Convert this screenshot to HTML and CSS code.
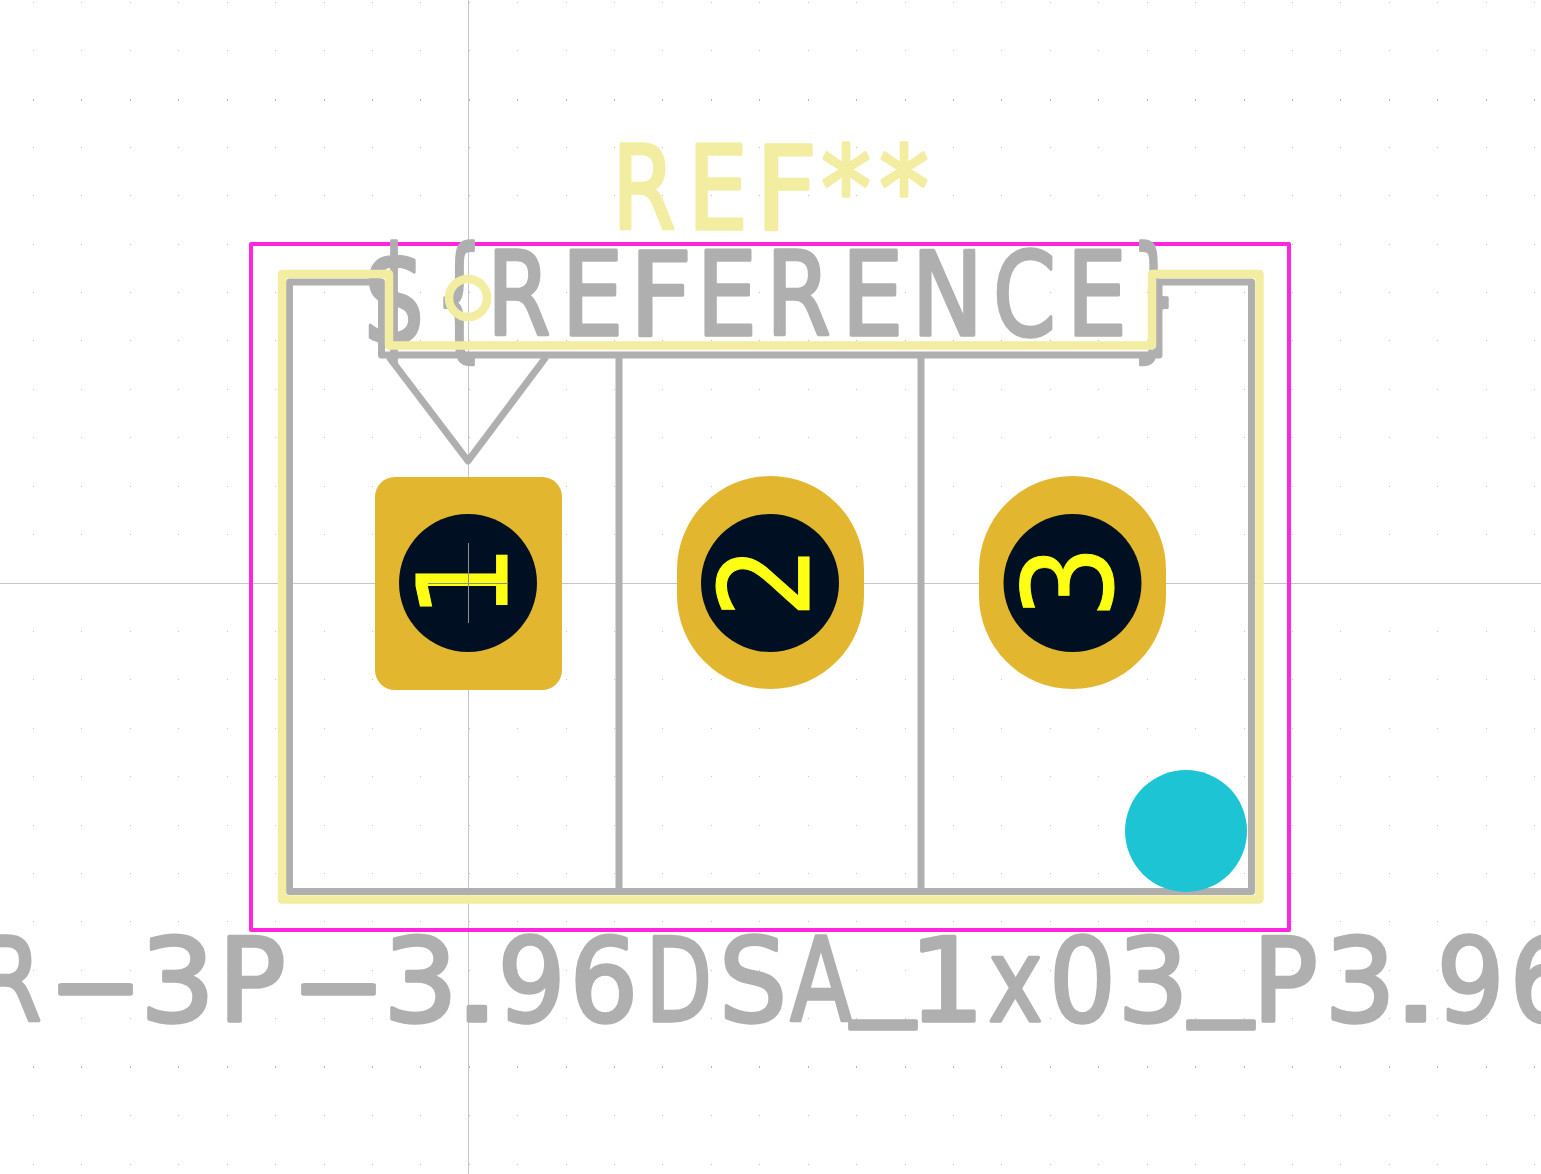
FILE: index.html
```html
<!DOCTYPE html>
<html lang="en">
<head>
  <meta charset="UTF-8" />
  <title>Footprint viewer</title>
  <link rel="stylesheet" href="styles.css">
</head>
<body>
  <svg class="canvas" viewBox="0 0 1541 1174">
    <!-- Grid -->
    <g class="grid-rows">
      <line x1="33" x2="1541" y1="2" y2="2" />
      <line x1="33" x2="1541" y1="50.4" y2="50.4" />
      <line class="major" x1="33" x2="1541" y1="100" y2="100" />
      <line x1="33" x2="1541" y1="147.2" y2="147.2" />
      <line x1="33" x2="1541" y1="195.6" y2="195.6" />
      <line x1="33" x2="1541" y1="244" y2="244" />
      <line x1="33" x2="1541" y1="292.5" y2="292.5" />
      <line x1="33" x2="1541" y1="340.9" y2="340.9" />
      <line x1="33" x2="1541" y1="389.3" y2="389.3" />
      <line x1="33" x2="1541" y1="437.7" y2="437.7" />
      <line x1="33" x2="1541" y1="486.2" y2="486.2" />
      <line x1="33" x2="1541" y1="534.6" y2="534.6" />
      <line x1="33" x2="1541" y1="631.4" y2="631.4" />
      <line x1="33" x2="1541" y1="679.8" y2="679.8" />
      <line x1="33" x2="1541" y1="728.3" y2="728.3" />
      <line x1="33" x2="1541" y1="776.7" y2="776.7" />
      <line x1="33" x2="1541" y1="825.1" y2="825.1" />
      <line x1="33" x2="1541" y1="873.5" y2="873.5" />
      <line x1="33" x2="1541" y1="921.9" y2="921.9" />
      <line x1="33" x2="1541" y1="970.4" y2="970.4" />
      <line x1="33" x2="1541" y1="1018.8" y2="1018.8" />
      <line class="major" x1="33" x2="1541" y1="1067" y2="1067" />
      <line x1="33" x2="1541" y1="1115.6" y2="1115.6" />
      <line x1="33" x2="1541" y1="1164" y2="1164" />
    </g>

    <!-- Origin axes -->
    <line class="axis" x1="468.5" x2="468.5" y1="0" y2="1174" />
    <line class="axis" x1="0" x2="1541" y1="583.5" y2="583.5" />

    <!-- Courtyard -->
    <rect class="courtyard" x="251" y="244" width="1038" height="686" />

    <!-- Fab layer text and outline -->
    <text class="fab-text" y="335">
      <tspan class="tall" x="361.6" y="343" textLength="66" lengthAdjust="spacingAndGlyphs">$</tspan><tspan class="tall" x="434.7" textLength="48.7" lengthAdjust="spacingAndGlyphs">{</tspan><tspan x="487" y="335" textLength="63.6" lengthAdjust="spacingAndGlyphs">R</tspan><tspan x="561.4" textLength="61.9" lengthAdjust="spacingAndGlyphs">E</tspan><tspan x="629.2" textLength="63.1" lengthAdjust="spacingAndGlyphs">F</tspan><tspan x="696.6" textLength="60.5" lengthAdjust="spacingAndGlyphs">E</tspan><tspan x="765.9" textLength="64.8" lengthAdjust="spacingAndGlyphs">R</tspan><tspan x="841.4" textLength="61.9" lengthAdjust="spacingAndGlyphs">E</tspan><tspan x="911.6" textLength="71.8" lengthAdjust="spacingAndGlyphs">N</tspan><tspan x="993" textLength="62.9" lengthAdjust="spacingAndGlyphs">C</tspan><tspan x="1066.6" textLength="60.5" lengthAdjust="spacingAndGlyphs">E</tspan><tspan class="tall" x="1131.1" y="343" textLength="45.7" lengthAdjust="spacingAndGlyphs">}</tspan>
    </text>
    <text class="fab-text" y="1021">
      <tspan x="-23.1" textLength="64.8" lengthAdjust="spacingAndGlyphs">R</tspan><tspan x="49.5" textLength="92" lengthAdjust="spacingAndGlyphs">-</tspan><tspan x="140" textLength="75.2" lengthAdjust="spacingAndGlyphs">3</tspan><tspan x="218" textLength="67.8" lengthAdjust="spacingAndGlyphs">P</tspan><tspan x="292.5" textLength="92" lengthAdjust="spacingAndGlyphs">-</tspan><tspan x="383" textLength="75.2" lengthAdjust="spacingAndGlyphs">3</tspan><tspan x="452.5" textLength="48.9" lengthAdjust="spacingAndGlyphs">.</tspan><tspan x="497.5" textLength="68.1" lengthAdjust="spacingAndGlyphs">9</tspan><tspan x="569.4" textLength="68.7" lengthAdjust="spacingAndGlyphs">6</tspan><tspan x="645.5" textLength="66.6" lengthAdjust="spacingAndGlyphs">D</tspan><tspan x="718.9" textLength="68" lengthAdjust="spacingAndGlyphs">S</tspan><tspan x="790.3" textLength="61.4" lengthAdjust="spacingAndGlyphs">A</tspan><tspan x="851.3" y="1002" textLength="63.5" lengthAdjust="spacingAndGlyphs">_</tspan><tspan x="908.8" y="1021" textLength="76.2" lengthAdjust="spacingAndGlyphs">1</tspan><tspan x="988.3" textLength="54.4" lengthAdjust="spacingAndGlyphs">x</tspan><tspan x="1049.1" textLength="66.9" lengthAdjust="spacingAndGlyphs">0</tspan><tspan x="1117.5" textLength="71.2" lengthAdjust="spacingAndGlyphs">3</tspan><tspan x="1189.3" y="1002" textLength="63.5" lengthAdjust="spacingAndGlyphs">_</tspan><tspan x="1252.4" y="1021" textLength="65.3" lengthAdjust="spacingAndGlyphs">P</tspan><tspan x="1324.5" textLength="71.2" lengthAdjust="spacingAndGlyphs">3</tspan><tspan x="1391.5" textLength="48.9" lengthAdjust="spacingAndGlyphs">.</tspan><tspan x="1436.5" textLength="68.1" lengthAdjust="spacingAndGlyphs">9</tspan><tspan x="1509.4" textLength="68.7" lengthAdjust="spacingAndGlyphs">6</tspan>
    </text>
    <path class="fab" d="M289.5 282 H381.5 V355 H1159 V282 H1251.5 V891.5 H289.5 Z" />
    <path class="fab" d="M619 355 V891.5 M921 355 V891.5" />
    <path class="fab" d="M389 357 L468 461 L546 357" />

    <!-- Silkscreen -->
    <text class="silk-text" y="229">
      <tspan x="612" textLength="63.6" lengthAdjust="spacingAndGlyphs">R</tspan><tspan x="687.6" textLength="60.5" lengthAdjust="spacingAndGlyphs">E</tspan><tspan x="755.5" textLength="61.8" lengthAdjust="spacingAndGlyphs">F</tspan><tspan x="821" textLength="50" lengthAdjust="spacingAndGlyphs">*</tspan><tspan x="879" textLength="50" lengthAdjust="spacingAndGlyphs">*</tspan>
    </text>
    <path class="silk" d="M282 274 H389 V345.5 H1152 V274 H1259.5 V899.5 H282 Z" />
    <circle class="silk" cx="468" cy="298" r="19" />

    <!-- Pads -->
    <rect class="pad" x="375" y="477" width="187" height="213" rx="20" />
    <rect class="pad" x="677" y="476" width="187" height="213" rx="93.5" />
    <rect class="pad" x="979" y="476" width="187" height="213" rx="93.5" />
    <circle class="hole" cx="468" cy="583" r="69" />
    <circle class="hole" cx="770" cy="583" r="69" />
    <circle class="hole" cx="1072.5" cy="583" r="69" />

    <text class="pad-num" transform="translate(506.5 606) rotate(-90)" x="-12.9" textLength="74.7" lengthAdjust="spacingAndGlyphs">1</text>
    <text class="pad-num" transform="translate(808.5 610) rotate(-90)" x="-8.3" textLength="72.7" lengthAdjust="spacingAndGlyphs">2</text>
    <text class="pad-num" transform="translate(1111.5 610) rotate(-90)" x="-8.8" textLength="73.8" lengthAdjust="spacingAndGlyphs">3</text>

    <!-- Anchor cross on pad 1 -->
    <path class="anchor" d="M468.5 543 V623 M428 583.5 H508" />

    <!-- Marker -->
    <circle class="marker" cx="1186" cy="831" r="61" />
  </svg>
</body>
</html>
```

FILE: styles.css
```css
/* Global Styles */
html, body {
  margin: 0;
  padding: 0;
  background: #fff;
  overflow: hidden;
}
.canvas {
  display: block;
  width: 1541px;
  height: 1174px;
}
/* Grid */
.grid-rows line {
  stroke: #c2c2c2;
  stroke-width: 1;
  stroke-dasharray: 1 47.42;
  shape-rendering: crispEdges;
}
.grid-rows line.major {
  stroke: #b4b4b4;
  stroke-width: 2;
}
.axis {
  stroke: #c6c6c6;
  stroke-width: 1;
}
.anchor {
  fill: none;
  stroke: #8f8f8f;
  stroke-width: 1;
}
/* Layers */
.courtyard {
  fill: none;
  stroke: #ff26e2;
  stroke-width: 4;
  stroke-linejoin: round;
}
.fab {
  fill: none;
  stroke: #afafaf;
  stroke-width: 7;
  stroke-linejoin: round;
}
.silk {
  fill: none;
  stroke: #f2eda1;
  stroke-width: 8.5;
  stroke-linejoin: round;
}
/* Text */
.fab-text, .silk-text {
  font-family: "DejaVu Sans", sans-serif;
  font-size: 116px;
  stroke-width: 3.5;
  stroke-linejoin: round;
}
.fab-text {
  fill: #afafaf;
  stroke: #afafaf;
}
.fab-text .tall {
  font-size: 134px;
}
.silk-text {
  fill: #f2eda1;
  stroke: #f2eda1;
}
.pad-num {
  font-family: "DejaVu Sans", sans-serif;
  font-size: 125px;
  fill: #ffff14;
  stroke: #ffff14;
  stroke-width: 1;
}
/* Pads */
.pad {
  fill: #e2b62e;
}
.hole {
  fill: #001023;
}
.marker {
  fill: #1cc4d4;
}
```
